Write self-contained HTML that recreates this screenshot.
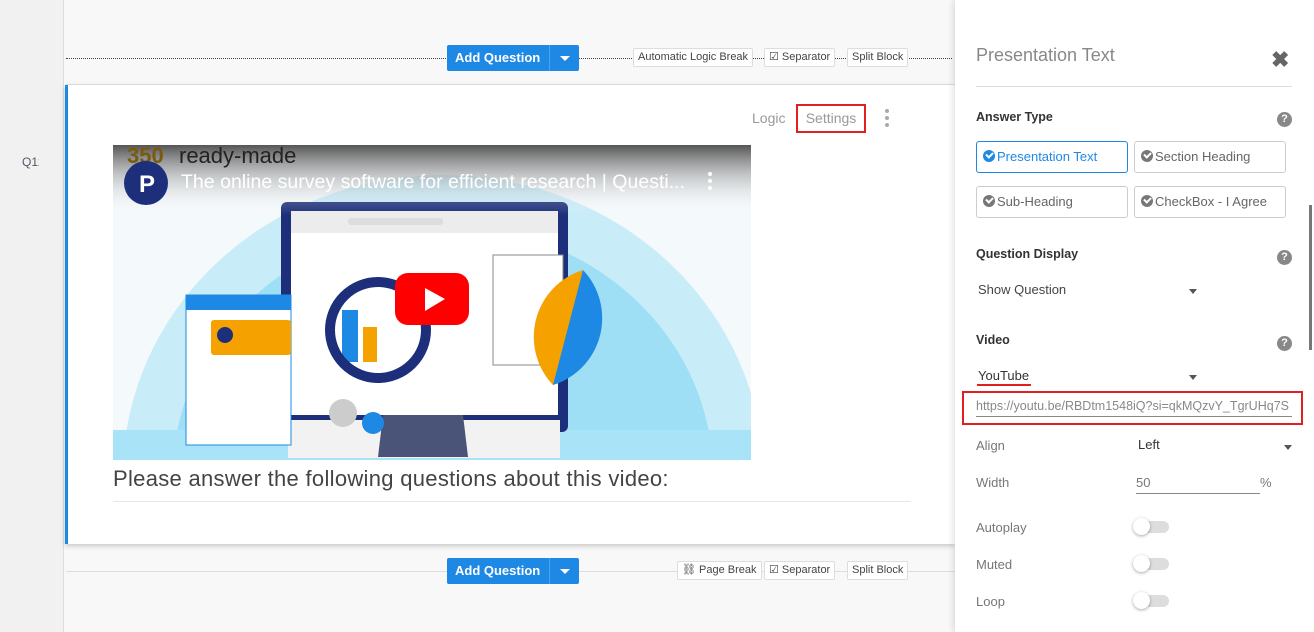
<!DOCTYPE html>
<html><head><meta charset="utf-8"><style>
*{box-sizing:border-box;margin:0;padding:0}
html{overflow:hidden}
body{width:1314px;height:632px;overflow:hidden;position:relative;background:#f8f8f8;font-family:"Liberation Sans",sans-serif;color:#555}
.abs{position:absolute}
.gut{left:0;top:0;width:64px;height:632px;background:#f1f1f1;border-right:1px solid #ddd}
.btn{background:#1e88e5;color:#fff;font-size:13px;font-weight:bold;border-radius:2px;height:26px;display:flex;align-items:center}
.btn span{padding:0 9px 0 8px;border-right:1px solid #4aa3ef;height:26px;line-height:26px}
.btn i{width:29px;height:26px;position:relative}
.btn i:after{content:"";position:absolute;left:10px;top:11px;border:5px solid transparent;border-top:5px solid #fff;border-bottom:0}
.tag{background:#fff;border:1px solid #ddd;border-radius:2px;font-size:11px;color:#444;height:19px;line-height:17px;padding:0 4px;white-space:nowrap}
.panel{left:955px;top:0;width:359px;height:632px;background:#fff;box-shadow:-2px 0 6px rgba(0,0,0,.12)}
.lbl{font-size:12.5px;font-weight:bold;color:#333}
.q{width:15px;height:15px;border-radius:50%;background:#888;color:#fff;font-size:11px;font-weight:bold;text-align:center;line-height:15px}
.opt{height:32px;border:1px solid #ccc;border-radius:3px;font-size:13px;color:#666;line-height:30px;padding-left:6px;white-space:nowrap}
.ck{display:inline-block;width:12px;height:12px;border-radius:50%;background:#777;vertical-align:-1px;margin-right:2px;position:relative}
.ck:after{content:"";position:absolute;left:3px;top:2px;width:5px;height:3px;border-left:2px solid #fff;border-bottom:2px solid #fff;transform:rotate(-45deg)}
.sm{font-size:13px;color:#777}
.tog{width:34px;height:12px;border-radius:6px;background:#ddd}
.tog:before{content:"";position:absolute;left:-2px;top:-3px;width:17px;height:17px;border-radius:50%;background:#fff;box-shadow:0 1px 3px rgba(0,0,0,.35)}
.caret{border:4px solid transparent;border-top:5px solid #555;border-bottom:0;width:0;height:0}
</style></head><body>
<div class="abs gut"></div>
<div class="abs" style="left:22px;top:155px;width:17px;overflow:hidden;font-size:12px;color:#556;white-space:nowrap">Q12</div>

<div class="abs" style="left:66px;top:58px;width:886px;border-top:1px dotted #444"></div>
<div class="abs" style="left:66px;top:84px;width:889px;border-top:1px solid #e2e2e2"></div>
<div class="abs btn" style="left:447px;top:45px"><span>Add Question</span><i></i></div>
<div class="abs tag" style="left:633px;top:48px">Automatic Logic Break</div>
<div class="abs tag" style="left:764px;top:48px">☑ Separator</div>
<div class="abs tag" style="left:847px;top:48px">Split Block</div>

<div class="abs" style="left:65px;top:85px;width:890px;height:459px;background:#fff;border-left:3px solid #1e88e5;box-shadow:0 2px 5px rgba(0,0,0,.2)"></div>
<div class="abs" style="left:752px;top:110px;font-size:14px;color:#999">Logic</div>
<div class="abs" style="left:796px;top:104px;width:70px;height:29px;border:2px solid #e02020;font-size:14px;color:#999;text-align:center;line-height:25px">Settings</div>
<div class="abs" style="left:885px;top:109px;width:4px;height:4px;border-radius:50%;background:#aaa;box-shadow:0 7px 0 #aaa,0 14px 0 #aaa"></div>

<svg class="abs" style="left:113px;top:145px" width="638" height="315" viewBox="0 0 638 315">
<defs><linearGradient id="g" x1="0" y1="0" x2="0" y2="1"><stop offset="0" stop-color="#555"/><stop offset="1" stop-color="#fff" stop-opacity="0"/></linearGradient></defs>
<rect width="638" height="315" fill="#f4f9fc"/>
<ellipse cx="330" cy="330" rx="320" ry="300" fill="#c9ecf9"/>
<ellipse cx="330" cy="330" rx="270" ry="250" fill="#9fdff5"/>
<rect x="0" y="285" width="638" height="30" fill="#a9e3f7"/>
<rect x="168" y="57" width="287" height="230" rx="6" fill="#1d2f7a"/>
<rect x="178" y="66" width="267" height="204" fill="#fff"/>
<rect x="178" y="66" width="267" height="22" fill="#ececec"/>
<rect x="235" y="73" width="95" height="7" rx="3" fill="#ddd"/>
<rect x="175" y="275" width="272" height="38" fill="#f2f2f2"/>
<polygon points="270,270 350,270 355,312 265,312" fill="#4a5478"/>
<rect x="380" y="110" width="70" height="110" fill="#fff" stroke="#888"/>
<path d="M470,125 A70,70 0 0 0 440,240 L470,220 Z" fill="#f5a100"/>
<path d="M470,125 A70,70 0 0 1 440,240 Z" fill="#1e88e5"/>
<rect x="73" y="150" width="105" height="150" fill="#fff" stroke="#1e88e5"/>
<rect x="73" y="150" width="105" height="15" fill="#1e88e5"/>
<rect x="98" y="175" width="80" height="35" rx="3" fill="#f5a100"/>
<circle cx="112" cy="190" r="8" fill="#1d2f7a"/>
<rect x="229" y="165" width="16" height="52" fill="#1e88e5"/>
<rect x="250" y="182" width="14" height="35" fill="#f5a100"/>
<circle cx="265" cy="185" r="48" fill="none" stroke="#1d2f7a" stroke-width="10"/>
<circle cx="230" cy="268" r="14" fill="#ccc"/>
<circle cx="260" cy="278" r="11" fill="#1e88e5"/>
<rect width="638" height="70" fill="url(#g)"/>
<text x="66" y="18" font-family="Liberation Sans" font-size="22" fill="#222">ready-made</text>
<text x="14" y="18" font-family="Liberation Sans" font-weight="bold" font-size="22" fill="#7a5a10">350</text>
<circle cx="33" cy="38" r="22" fill="#1d2f7a"/>
<text x="26" y="47" font-family="Liberation Sans" font-weight="bold" font-size="24" fill="#fff">P</text>
<text x="68" y="43" font-family="Liberation Sans" font-size="19.5" fill="#fff" textLength="504">The online survey software for efficient research | Questi...</text>
<circle cx="597" cy="29" r="2" fill="#fff"/><circle cx="597" cy="36" r="2" fill="#fff"/><circle cx="597" cy="43" r="2" fill="#fff"/>
<rect x="282" y="128" width="74" height="52" rx="13" fill="#f00"/>
<polygon points="312,143 312,166 332,154" fill="#fff"/>
</svg>

<div class="abs" style="left:113px;top:466px;font-size:22px;color:#444;letter-spacing:.3px;white-space:nowrap;width:552px">Please answer the following questions about this video:</div>
<div class="abs" style="left:113px;top:501px;width:798px;border-top:1px solid #e6e6e6"></div>

<div class="abs" style="left:66px;top:571px;width:889px;border-top:1px solid #ddd"></div>
<div class="abs btn" style="left:447px;top:558px"><span>Add Question</span><i></i></div>
<div class="abs tag" style="left:677px;top:561px">⛓ Page Break</div>
<div class="abs tag" style="left:764px;top:561px">☑ Separator</div>
<div class="abs tag" style="left:847px;top:561px">Split Block</div>

<div class="abs panel"></div>
<div class="abs" style="left:976px;top:45px;font-size:18px;color:#888">Presentation Text</div>
<div class="abs" style="left:1271px;top:47px;font-size:22px;font-weight:bold;color:#666">✖</div>
<div class="abs" style="left:976px;top:86px;width:316px;border-top:1px solid #ddd"></div>

<div class="abs lbl" style="left:976px;top:110px">Answer Type</div>
<div class="abs q" style="left:1277px;top:112px">?</div>
<div class="abs opt" style="left:976px;top:141px;width:152px;border-color:#1e88e5;color:#1e88e5"><span class="ck" style="background:#1e88e5"></span>Presentation Text</div>
<div class="abs opt" style="left:1134px;top:141px;width:152px"><span class="ck"></span>Section Heading</div>
<div class="abs opt" style="left:976px;top:186px;width:152px"><span class="ck"></span>Sub-Heading</div>
<div class="abs opt" style="left:1134px;top:186px;width:152px"><span class="ck"></span>CheckBox - I Agree</div>

<div class="abs lbl" style="left:976px;top:247px">Question Display</div>
<div class="abs q" style="left:1277px;top:250px">?</div>
<div class="abs" style="left:978px;top:282px;font-size:13px;color:#444">Show Question</div>
<div class="abs caret" style="left:1189px;top:289px"></div>

<div class="abs lbl" style="left:976px;top:333px">Video</div>
<div class="abs q" style="left:1277px;top:336px">?</div>
<div class="abs" style="left:978px;top:368px;font-size:13px;color:#333">YouTube</div>
<div class="abs" style="left:977px;top:384px;width:54px;border-top:2px solid #e02020"></div>
<div class="abs caret" style="left:1189px;top:375px"></div>
<div class="abs" style="left:962px;top:391px;width:341px;height:34px;border:2px solid #e02020"></div>
<div class="abs" style="left:976px;top:399px;width:316px;overflow:hidden;white-space:nowrap;font-size:12.5px;color:#888;border-bottom:1px solid #888;padding-bottom:3px">https://youtu.be/RBDtm1548iQ?si=qkMQzvY_TgrUHq7S</div>

<div class="abs sm" style="left:976px;top:438px">Align</div>
<div class="abs" style="left:1138px;top:437px;font-size:13px;color:#333">Left</div>
<div class="abs caret" style="left:1284px;top:445px"></div>
<div class="abs sm" style="left:976px;top:475px">Width</div>
<div class="abs" style="left:1136px;top:475px;width:124px;font-size:13px;color:#777;border-bottom:1px solid #888;padding-bottom:3px">50</div>
<div class="abs sm" style="left:1260px;top:475px">%</div>
<div class="abs sm" style="left:976px;top:520px">Autoplay</div>
<div class="abs tog" style="left:1135px;top:521px"></div>
<div class="abs sm" style="left:976px;top:557px">Muted</div>
<div class="abs tog" style="left:1135px;top:558px"></div>
<div class="abs sm" style="left:976px;top:594px">Loop</div>
<div class="abs tog" style="left:1135px;top:595px"></div>
<div class="abs" style="left:1309px;top:205px;width:3px;height:145px;background:#777"></div>
</body></html>
